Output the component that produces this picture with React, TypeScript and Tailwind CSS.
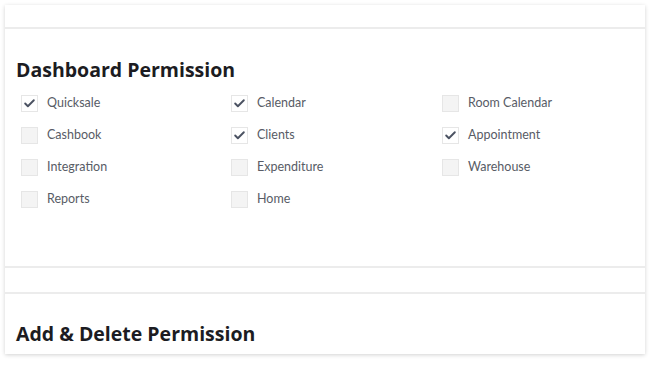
import { Check } from 'lucide-react'

type Perm = { label: string; checked: boolean }

const dashboardPerms: Perm[] = [
  { label: 'Quicksale', checked: true },
  { label: 'Calendar', checked: true },
  { label: 'Room Calendar', checked: false },
  { label: 'Cashbook', checked: false },
  { label: 'Clients', checked: true },
  { label: 'Appointment', checked: true },
  { label: 'Integration', checked: false },
  { label: 'Expenditure', checked: false },
  { label: 'Warehouse', checked: false },
  { label: 'Reports', checked: false },
  { label: 'Home', checked: false },
]

function PermCheckbox({ label, checked }: Perm) {
  return (
    <label className="flex h-8 items-center gap-[9px]">
      <span
        className={
          'flex size-[17px] items-center justify-center border border-[#e6e6e6] ' +
          (checked ? 'bg-white' : 'bg-[#f4f4f4]')
        }
      >
        {checked && <Check className="size-[13px] text-[#4b5262]" strokeWidth={3.5} />}
      </span>
      <span className="text-[12.5px] text-[#585c66]">{label}</span>
    </label>
  )
}

export default function App() {
  return (
    <div className="min-h-[365px] bg-white px-[5px] pt-[5px] font-['Lato',sans-serif]">
      <div className="w-[640px] bg-white shadow-[0_1px_4px_rgba(0,0,0,0.18)]">
        <div className="h-[24px] border-b-2 border-[#ececec]" />

        <div className="pt-[29px] pb-[51px]">
          <h2 className="pl-[11px] font-['Open_Sans',sans-serif] text-[19.5px] leading-6 font-bold text-[#1c1c22]">
            Dashboard Permission
          </h2>
          <div className="mt-[5px] grid grid-cols-[210px_211px_1fr] pl-[16px]">
            {dashboardPerms.map((p) => (
              <PermCheckbox key={p.label} {...p} />
            ))}
          </div>
        </div>

        <div className="h-[28px] border-y-2 border-[#ececec]" />

        <div className="pt-[28px] pb-[8px]">
          <h2 className="pl-[11px] font-['Open_Sans',sans-serif] text-[19.5px] leading-6 font-bold text-[#1c1c22]">
            Add &amp; Delete Permission
          </h2>
        </div>
      </div>
    </div>
  )
}
